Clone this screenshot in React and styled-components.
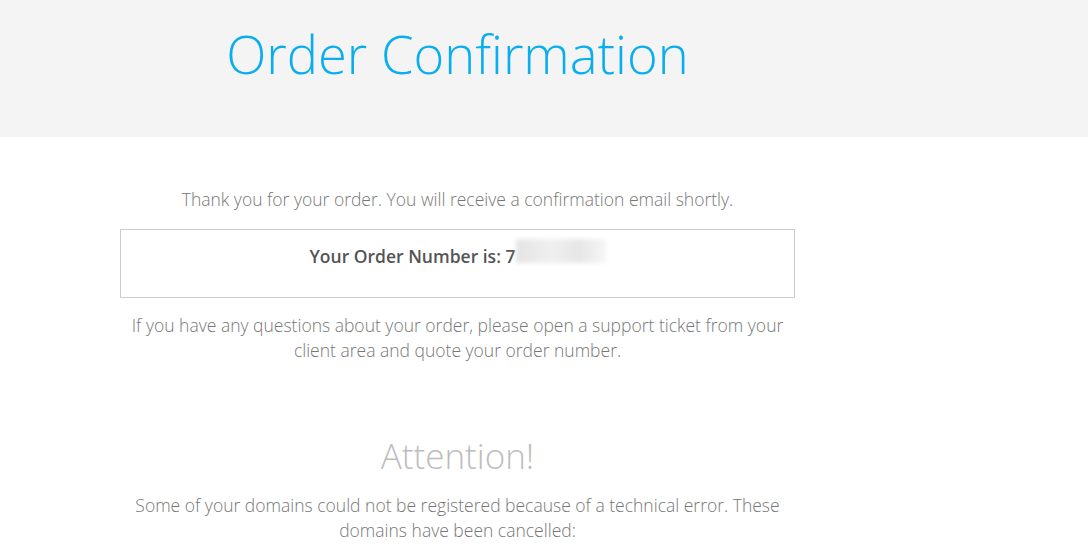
import React from "react";
import styled, { createGlobalStyle } from "styled-components";

const GlobalStyle = createGlobalStyle`
  html, body {
    margin: 0;
    padding: 0;
    background: #ffffff;
    font-family: "Open Sans", "Liberation Sans", sans-serif;
  }
`;

const Header = styled.header`
  height: 137px;
  background: #f4f4f4;
  display: flex;
  align-items: center;
`;

const Column = styled.div`
  width: 675px;
  margin-left: 120px;
  text-align: center;
`;

const Title = styled.h1`
  margin: 0 0 28px;
  font-size: 52.5px;
  font-weight: 300;
  color: #0aaeef;
  line-height: 1;
`;

const Main = styled.main`
  padding-top: 50px;
`;

const Lead = styled.p`
  margin: 0;
  font-size: 17.5px;
  font-weight: 300;
  line-height: 25px;
  color: #777;
`;

const OrderBox = styled.div`
  margin: 17px 0 15px;
  border: 1px solid #cccccc;
  padding-top: 9px;
  box-sizing: border-box;
  height: 69px;
`;

const OrderLabel = styled.span`
  font-size: 17.5px;
  font-weight: 600;
  color: #555;
`;

// stands in for the blurred-out order number
const Blurred = styled.span`
  display: inline-block;
  width: 90px;
  height: 24px;
  vertical-align: 0;
  background: linear-gradient(90deg, #e4e4e4, #f0f0f0 40%, #e6e6e6 70%, #f6f6f6);
  filter: blur(2px);
`;

const Attention = styled.h2`
  margin: 75px 0 20px;
  font-size: 35px;
  font-weight: 300;
  color: #bdbdbd;
  line-height: 1;
`;

export default function App() {
  return (
    <>
      <GlobalStyle />
      <Header>
        <Column>
          <Title>Order Confirmation</Title>
        </Column>
      </Header>
      <Main>
        <Column>
          <Lead>Thank you for your order. You will receive a confirmation email shortly.</Lead>
          <OrderBox>
            <OrderLabel>
              Your Order Number is: 7<Blurred />
            </OrderLabel>
          </OrderBox>
          <Lead>
            If you have any questions about your order, please open a support ticket from your
            client area and quote your order number.
          </Lead>
          <Attention>Attention!</Attention>
          <Lead>
            Some of your domains could not be registered because of a technical error. These
            domains have been cancelled:
          </Lead>
        </Column>
      </Main>
    </>
  );
}
